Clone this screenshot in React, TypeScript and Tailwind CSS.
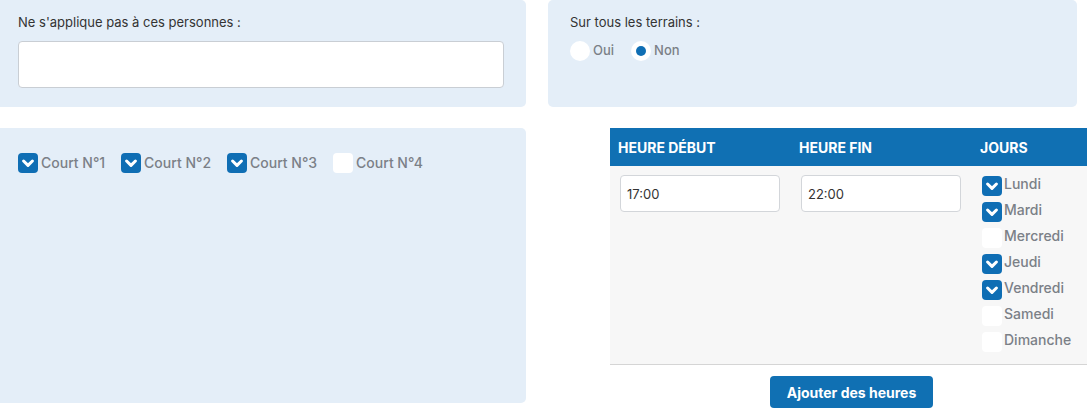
import React from 'react';

const Check = ({ checked }: { checked: boolean }) => (
    <span className={`w-5 h-5 rounded-[4px] flex items-center justify-center shrink-0 ${checked ? 'bg-[#0f6eb4]' : 'bg-white'}`}>
        {checked && (
            <svg viewBox="0 0 20 20" className="w-[16px] h-[16px]" fill="none" stroke="white" strokeWidth={3.8} strokeLinecap="round" strokeLinejoin="round">
                <path d="M4.5 7.5l5.5 5.5 5.5-5.5" />
            </svg>
        )}
    </span>
);

const courts = [
    { name: 'Court N°1', on: true },
    { name: 'Court N°2', on: true },
    { name: 'Court N°3', on: true },
    { name: 'Court N°4', on: false },
];

const days = [
    { name: 'Lundi', on: true },
    { name: 'Mardi', on: true },
    { name: 'Mercredi', on: false },
    { name: 'Jeudi', on: true },
    { name: 'Vendredi', on: true },
    { name: 'Samedi', on: false },
    { name: 'Dimanche', on: false },
];

export default function App() {
    return (
        <div className="w-[1087px] h-[408px] bg-white overflow-hidden font-['Inter','Liberation_Sans',sans-serif]">
            <div className="flex gap-[22px]">
                <div className="w-[526px] h-[107px] bg-[#e4eef8] rounded-r-[5px] pl-[18px] pr-[22px] pt-[14px]">
                    <p className="text-[13px] text-[#333] leading-[16px]">Ne s'applique pas à ces personnes :</p>
                    <input className="mt-[11px] w-[486px] h-[47px] bg-white border border-[#c9ced4] rounded-[4px] outline-none" />
                </div>
                <div className="w-[529px] h-[107px] bg-[#e4eef8] rounded-[5px] pl-[22px] pt-[14px]">
                    <p className="text-[13px] text-[#333] leading-[16px]">Sur tous les terrains :</p>
                    <div className="flex items-center mt-[11px] text-[13px] text-[#7b8087] font-medium">
                        <span className="w-5 h-5 rounded-full bg-white" />
                        <span className="ml-[3px]">Oui</span>
                        <span className="w-5 h-5 rounded-full bg-white ml-[17px] flex items-center justify-center">
                            <span className="w-[10px] h-[10px] rounded-full bg-[#0f6eb4]" />
                        </span>
                        <span className="ml-[3px]">Non</span>
                    </div>
                </div>
            </div>
            <div className="flex mt-[21px]">
                <div className="w-[526px] h-[275px] bg-[#e4eef8] rounded-r-[5px] pl-[18px] pt-[24px]">
                    <div className="flex items-center gap-[16px]">
                        {courts.map(c => (
                            <label key={c.name} className="flex items-center text-[14px] text-[#7b8087] font-medium">
                                <Check checked={c.on} />
                                <span className="ml-[3px]">{c.name}</span>
                            </label>
                        ))}
                    </div>
                </div>
                <div className="ml-[84px] w-[477px] flex flex-col">
                    <div className="h-[38px] bg-[#1070b3] flex items-center text-white font-bold text-[14px] uppercase">
                        <span className="w-[181px] pl-[8px]">Heure début</span>
                        <span className="w-[181px] pl-[8px]">Heure fin</span>
                        <span className="pl-[8px]">Jours</span>
                    </div>
                    <div className="h-[199px] bg-[#f7f7f7] border-b border-[#d5d5d5] flex pt-[9px]">
                        <div className="w-[181px] pl-[10px]">
                            <input defaultValue="17:00" className="w-[160px] h-[37px] bg-white border border-[#d3d6da] rounded-[4px] px-[6px] text-[13px] text-[#333] outline-none" />
                        </div>
                        <div className="w-[181px] pl-[10px]">
                            <input defaultValue="22:00" className="w-[160px] h-[37px] bg-white border border-[#d3d6da] rounded-[4px] px-[6px] text-[13px] text-[#333] outline-none" />
                        </div>
                        <div className="pl-[10px] flex flex-col pt-[1px]">
                            {days.map(d => (
                                <label key={d.name} className="h-[26px] flex items-start text-[14px] text-[#7b8087] font-medium">
                                    <Check checked={d.on} />
                                    <span className="ml-[2px] leading-[16px]">{d.name}</span>
                                </label>
                            ))}
                        </div>
                    </div>
                    <div className="flex justify-center mt-[11px]">
                        <button className="w-[163px] h-[32px] bg-[#1070b3] rounded-[4px] text-white font-bold text-[14px] ml-[6px]">
                            Ajouter des heures
                        </button>
                    </div>
                </div>
            </div>
        </div>
    );
}
